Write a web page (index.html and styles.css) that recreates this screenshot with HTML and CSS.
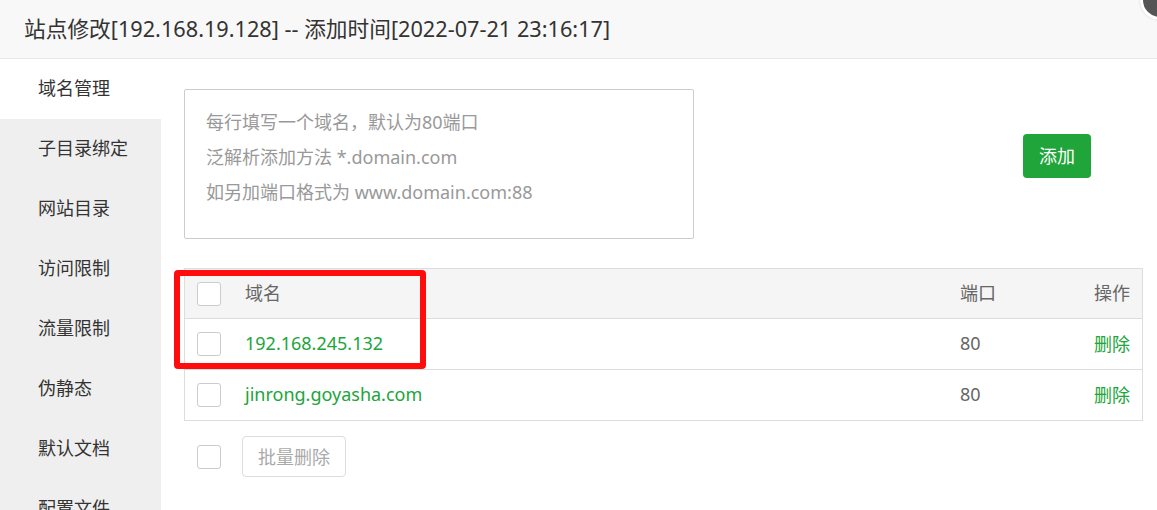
FILE: index.html
```html
<!DOCTYPE html>
<html lang="zh-CN">
<head>
<meta charset="utf-8">
<title>站点修改</title>
<link rel="stylesheet" href="styles.css">
</head>
<body>
<div class="dialog">
  <div class="header">站点修改[192.168.19.128] -- 添加时间[2022-07-21 23:16:17]</div>
  <span class="close-btn"></span>
  <div class="main">
    <ul class="sidebar">
      <li class="active">域名管理</li>
      <li>子目录绑定</li>
      <li>网站目录</li>
      <li>访问限制</li>
      <li>流量限制</li>
      <li>伪静态</li>
      <li>默认文档</li>
      <li>配置文件</li>
    </ul>
    <div class="content">
      <div class="add-row">
        <div class="textarea">
          <div class="ph">每行填写一个域名，默认为80端口</div>
          <div class="ph">泛解析添加方法 *.domain.com</div>
          <div class="ph">如另加端口格式为 www.domain.com:88</div>
        </div>
        <button class="btn-add">添加</button>
      </div>
      <div class="table-wrap">
        <div class="table">
          <div class="row head">
            <span class="cb"></span>
            <span class="c-name">域名</span>
            <span class="c-port">端口</span>
            <span class="c-op">操作</span>
          </div>
          <div class="row">
            <span class="cb"></span>
            <span class="c-name link">192.168.245.132</span>
            <span class="c-port">80</span>
            <span class="c-op link">删除</span>
          </div>
          <div class="row">
            <span class="cb"></span>
            <span class="c-name link">jinrong.goyasha.com</span>
            <span class="c-port">80</span>
            <span class="c-op link">删除</span>
          </div>
        </div>
        <div class="highlight"></div>
      </div>
      <div class="batch">
        <span class="cb"></span>
        <button class="btn-batch">批量删除</button>
      </div>
    </div>
  </div>
</div>
</body>
</html>
```

FILE: styles.css
```css
* { box-sizing: border-box; }
html, body {
  margin: 0;
  padding: 0;
  background: #fff;
  overflow: hidden;
}
body {
  font-family: "Noto Sans", "Noto Sans CJK SC", sans-serif;
  color: #333;
}
.dialog {
  position: relative;
  width: 1157px;
  height: 510px;
  overflow: hidden;
}
.header {
  height: 59px;
  line-height: 57px;
  padding-left: 24px;
  background: #f8f8f8;
  border-bottom: 1px solid #e8e8e8;
  font-size: 21.7px;
  color: #333;
  white-space: nowrap;
}
.close-btn {
  position: absolute;
  right: -23px;
  top: -20px;
  width: 40px;
  height: 40px;
  border-radius: 50%;
  background: #555;
  border: 3px solid #fff;
  box-shadow: 0 0 2px rgba(0,0,0,0.2);
}
.main {
  display: flex;
  height: 451px;
}
.sidebar {
  list-style: none;
  margin: 0;
  padding: 0;
  width: 161px;
  flex: none;
  background: #efefef;
}
.sidebar li {
  height: 60px;
  line-height: 59px;
  padding-left: 38px;
  font-size: 18px;
  color: #333;
}
.sidebar li.active {
  background: #fff;
}
.content {
  flex: 1;
  padding: 30px 14px 0 23px;
}
.add-row {
  display: flex;
  align-items: flex-start;
}
.textarea {
  width: 510px;
  height: 150px;
  border: 1px solid #ccc;
  border-radius: 2px;
  padding: 15px 0 0 21px;
}
.ph {
  height: 35px;
  line-height: 35px;
  font-size: 18px;
  color: #999;
  white-space: nowrap;
}
.btn-add {
  margin: 45px 0 0 329px;
  width: 68px;
  height: 44px;
  border: none;
  border-radius: 4px;
  background: #20a53a;
  color: #fff;
  font-family: inherit;
  font-size: 18px;
  padding: 0 0 2px;
}
.table-wrap {
  position: relative;
  margin-top: 29px;
}
.table {
  border: 1px solid #ddd;
}
.row {
  display: flex;
  align-items: center;
  height: 51px;
  border-top: 1px solid #ddd;
  padding: 0 12px 3px;
  font-size: 18px;
  color: #666;
}
.row .cb {
  margin-top: 3px;
}
.row.head {
  height: 49px;
  border-top: none;
  background: #f5f5f5;
}
.cb {
  display: inline-block;
  width: 24px;
  height: 24px;
  border: 1px solid #ccc;
  border-radius: 3px;
  background: #fff;
  flex: none;
}
.c-name {
  margin-left: 24px;
  width: 715px;
}
.c-port {
  flex: 1;
}
.c-op {
  text-align: right;
}
.link {
  color: #20a53a;
}
.highlight {
  position: absolute;
  left: -10px;
  top: 2px;
  width: 252px;
  height: 99px;
  border: 6px solid #ff0d0d;
  border-radius: 4px;
}
.batch {
  display: flex;
  align-items: center;
  margin-top: 15px;
  padding-left: 13px;
}
.btn-batch {
  margin-left: 21px;
  width: 104px;
  height: 41px;
  border: 1px solid #ddd;
  border-radius: 4px;
  background: #fff;
  color: #aaa;
  font-family: inherit;
  font-size: 18px;
  padding: 0 0 2px;
}
```
